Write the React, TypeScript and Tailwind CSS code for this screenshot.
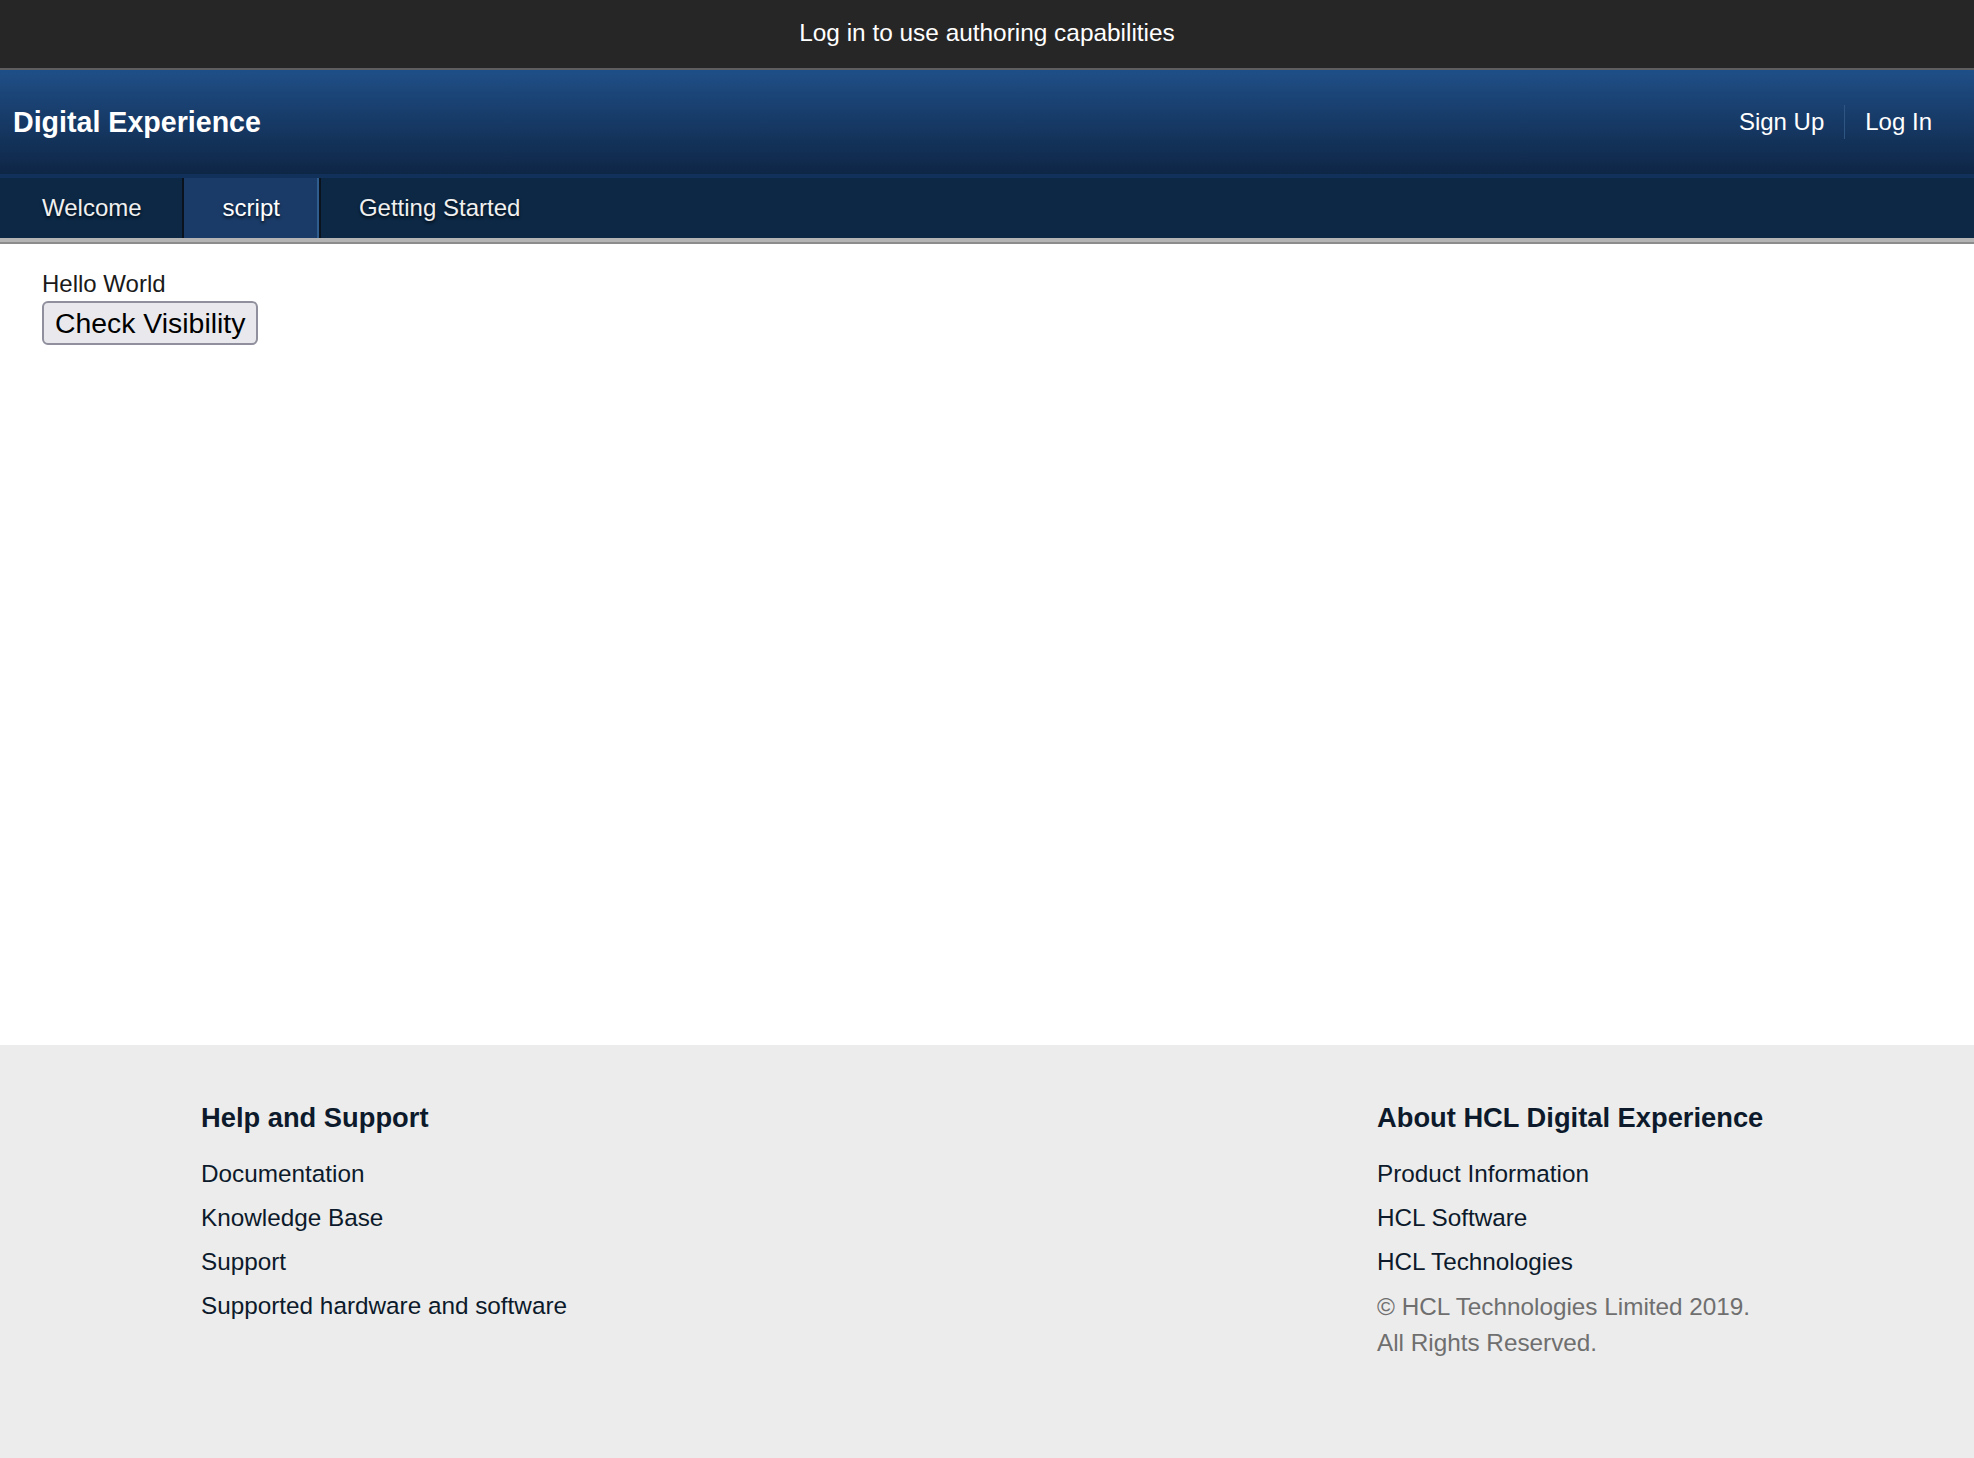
import type { FC } from "react";

const font = "font-['Liberation_Sans','Helvetica_Neue',Arial,sans-serif]";
const navShadow = "[text-shadow:0_2px_3px_rgba(0,0,0,0.7)]";

const helpLinks = ["Documentation", "Knowledge Base", "Support", "Supported hardware and software"];
const aboutLinks = ["Product Information", "HCL Software", "HCL Technologies"];

const TopBanner: FC = () => (
	<div className="flex h-[70px] items-center justify-center border-b-2 border-[#5e5e5e] bg-[#262626] pb-[2px]">
		<span className="text-[24.4px] leading-[28px] text-white">Log in to use authoring capabilities</span>
	</div>
);

const Header: FC = () => (
	<header>
		<div className="flex h-[104px] items-center justify-between bg-gradient-to-b from-[#1f4f88] to-[#0e2646] pl-[13px] pr-[22px]">
			<span className="text-[28.6px] font-bold leading-[32px] text-white">Digital Experience</span>
			<div className="flex items-center text-[24px] text-white">
				<a className="px-[20px] leading-[28px]">Sign Up</a>
				<span className="h-[34px] w-px bg-[#2f5682]" />
				<a className="px-[20px] leading-[28px]">Log In</a>
			</div>
		</div>
		<div className="h-[4px] bg-[#11305a]" />
		<nav className={`flex h-[60px] bg-[#0c2845] text-[24px] text-[#f0f0f0] ${navShadow}`}>
			<a className="flex items-center pl-[42px] pr-[40px]">Welcome</a>
			<a className="flex items-center border-x-2 border-[#0a121e] bg-[#1a3b67] px-[39px] text-white shadow-[inset_-2px_0_0_#2f5d8e]">
				script
			</a>
			<a className="flex items-center px-[38px]">Getting Started</a>
		</nav>
		<div className="h-[4px] bg-[#b4b4b4]" />
		<div className="h-[2px] bg-[#8c8c8c]" />
	</header>
);

const Content: FC = () => (
	<main className="h-[801px] bg-white pl-[42px] pt-[26px]">
		<p className="text-[24px] leading-[28px] text-[#1a1a1a]">Hello World</p>
		<button className="mt-[3px] h-[44px] rounded-[6px] border-2 border-[#8f8f9d] bg-[#e9e9ed] px-[11px] text-[28.4px] leading-[30px] text-black">
			Check Visibility
		</button>
	</main>
);

const Footer: FC = () => (
	<footer className="flex h-[413px] bg-[#ececec] pl-[201px] pt-[57px] text-[#0c1a2b]">
		<div className="w-[1176px]">
			<h3 className="text-[27.3px] font-bold leading-[32px]">Help and Support</h3>
			<ul className="mt-[18px] text-[24.3px] leading-[44px]">
				{helpLinks.map((l) => (
					<li key={l}>{l}</li>
				))}
			</ul>
		</div>
		<div>
			<h3 className="text-[27.3px] font-bold leading-[32px]">About HCL Digital Experience</h3>
			<ul className="mt-[18px] text-[24.3px] leading-[44px]">
				{aboutLinks.map((l) => (
					<li key={l}>{l}</li>
				))}
			</ul>
			<p className="mt-[5px] text-[24.3px] leading-[36px] text-[#6f6f6f]">
				© HCL Technologies Limited 2019.
				<br />
				All Rights Reserved.
			</p>
		</div>
	</footer>
);

const App: FC = () => (
	<div className={`${font} min-h-screen bg-white`}>
		<TopBanner />
		<Header />
		<Content />
		<Footer />
	</div>
);

export default App;
